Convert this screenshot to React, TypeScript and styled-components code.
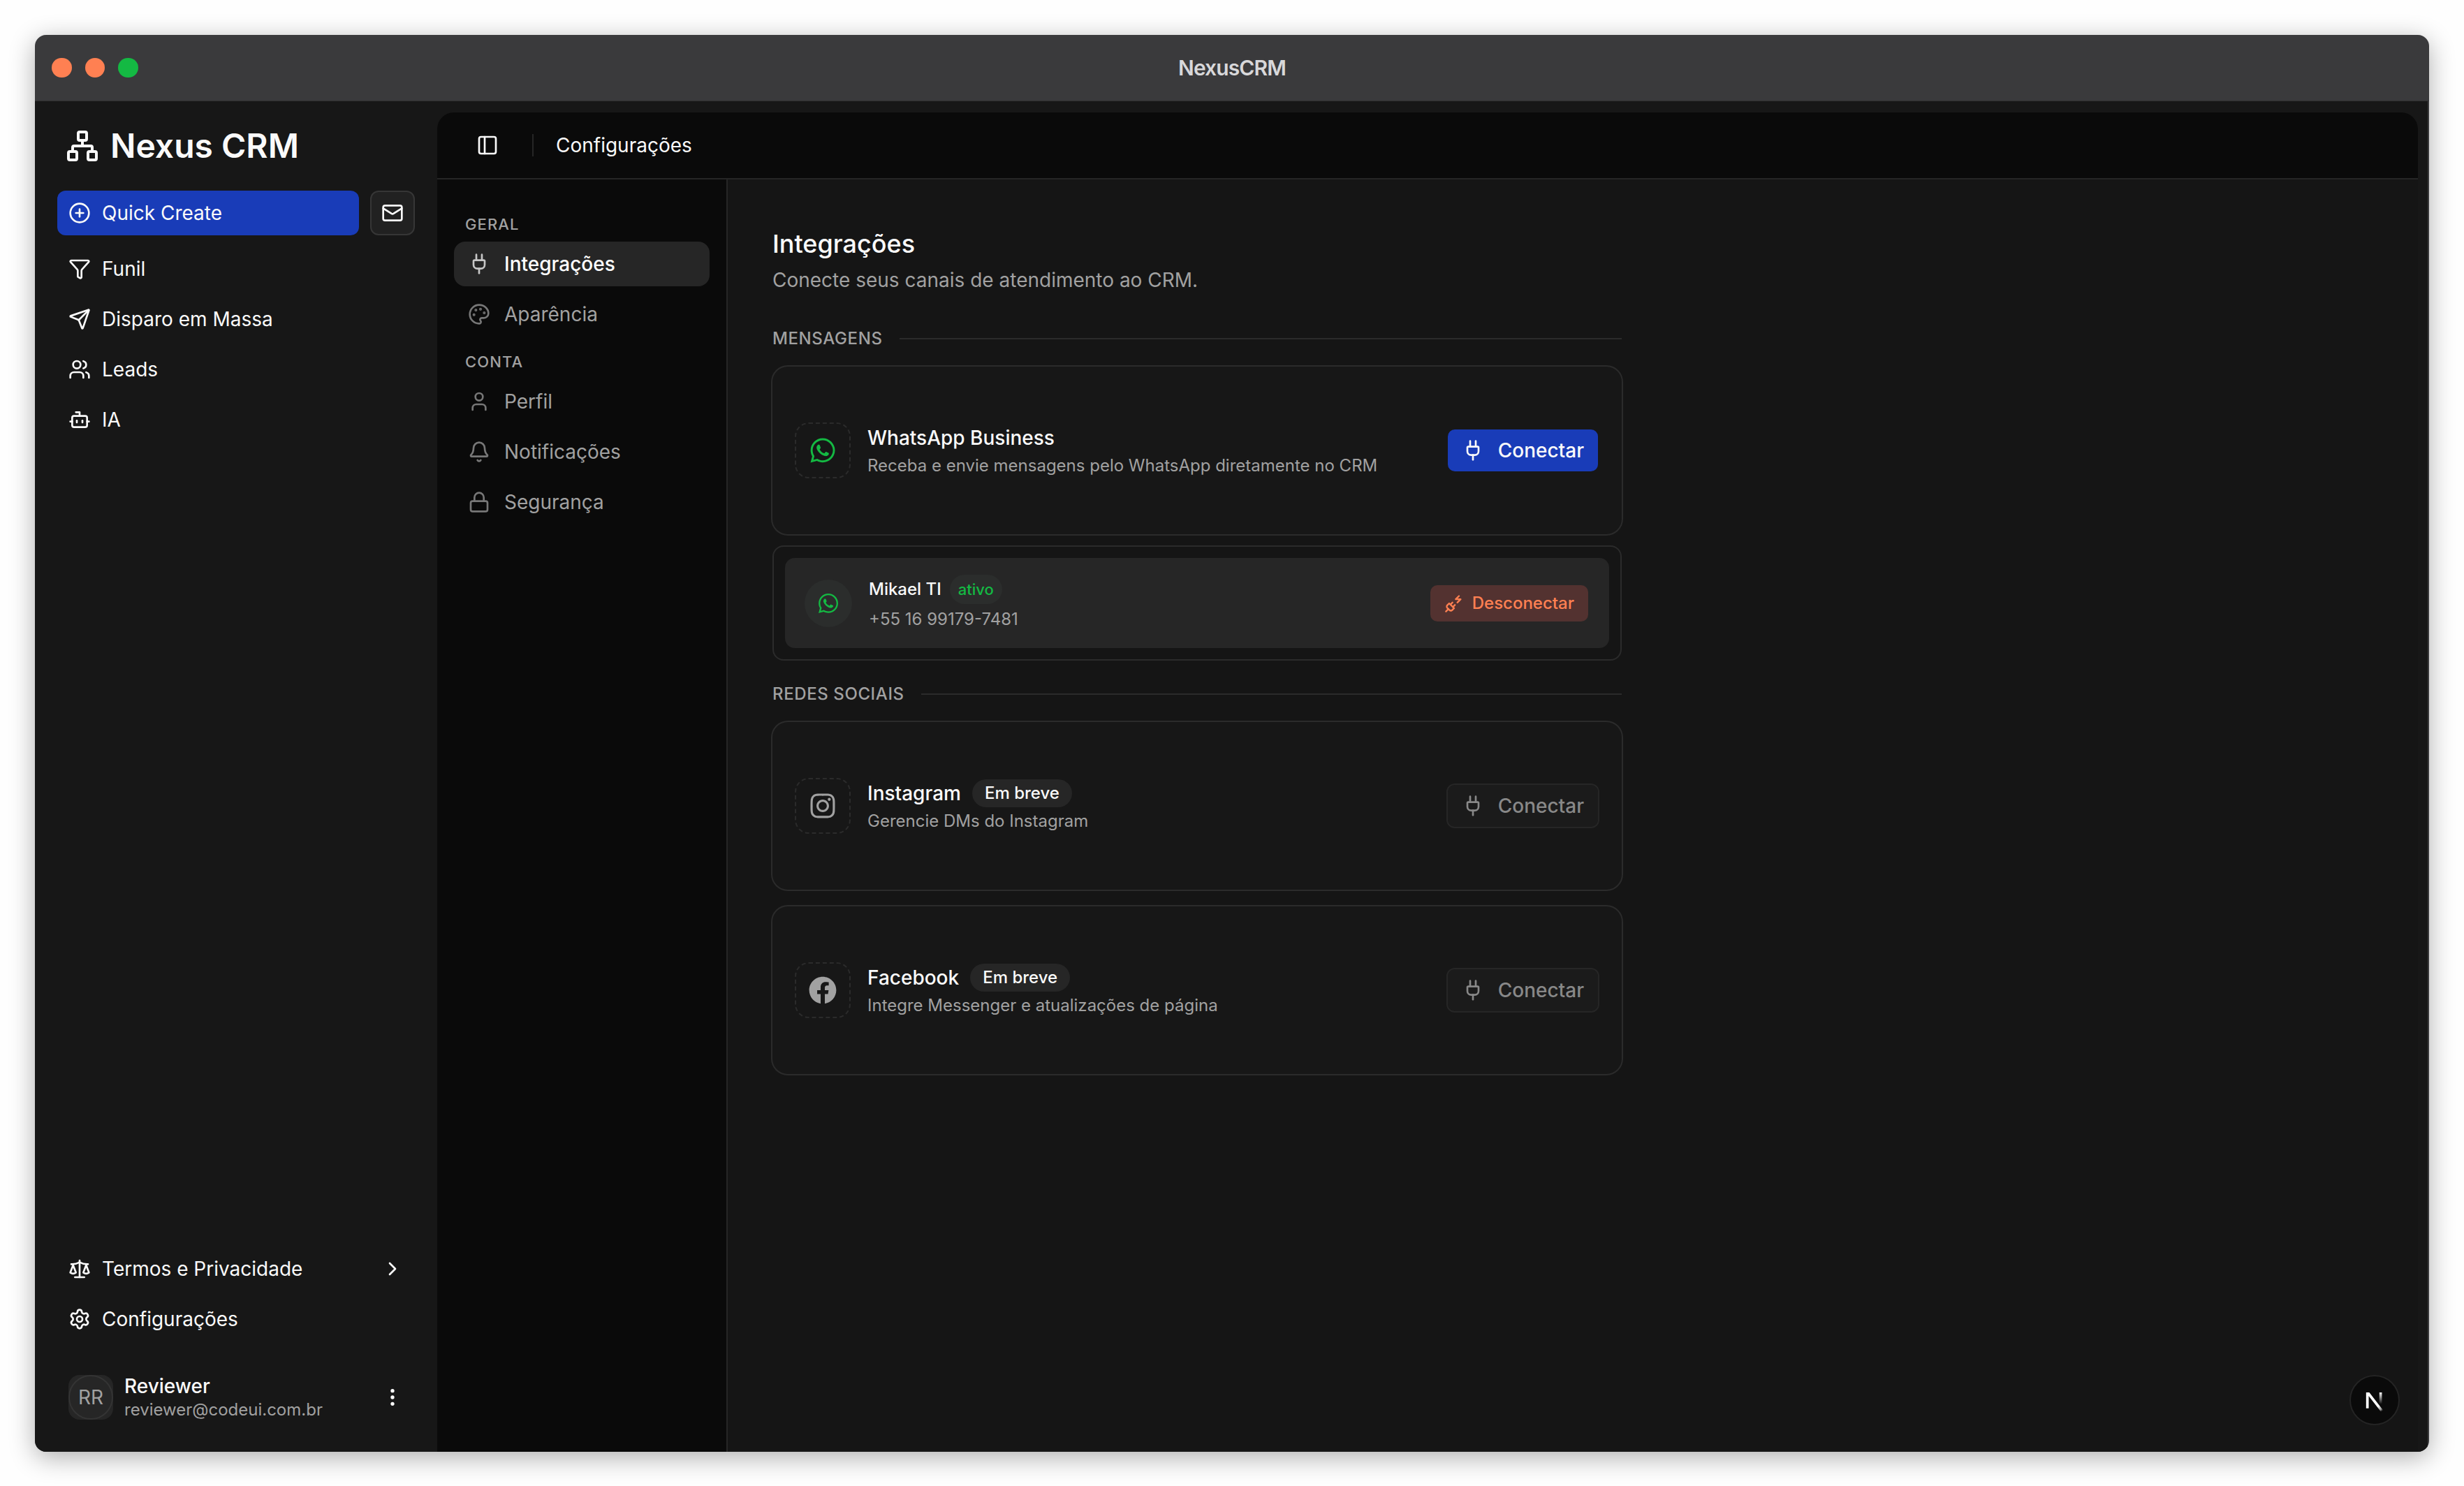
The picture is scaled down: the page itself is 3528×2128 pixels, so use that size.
import React from 'react';
import styled, { createGlobalStyle } from 'styled-components';
import {
  Bell,
  Bot,
  ChevronRight,
  CirclePlus,
  EllipsisVertical,
  Funnel,
  Lock,
  Mail,
  Network,
  Palette,
  PanelLeft,
  Plug,
  Scale,
  Send,
  Settings,
  User,
  Users,
} from 'lucide-react';
import { FaFacebook, FaInstagram, FaWhatsapp } from 'react-icons/fa';

const color = {
  sidebar: '#171717',
  panel: '#0a0a0a',
  content: '#151515',
  card: '#171717',
  accent: '#262626',
  border: '#2b2b2b',
  line: '#2b2b2b',
  text: '#fafafa',
  muted: '#a1a1a1',
  primary: '#193cb8',
  danger: '#ff8052',
  success: '#14b943',
};

const GlobalStyle = createGlobalStyle`
  *, *::before, *::after { box-sizing: border-box; }
  body {
    margin: 0;
    background: #fefefe;
    font-family: Inter, "Liberation Sans", sans-serif;
    font-size: 28px;
    line-height: 40px;
    color: ${color.text};
  }
  svg { display: block; flex: none; }
  button { font: inherit; color: inherit; margin: 0; }
`;

const Desktop = styled.div`
  width: 3528px;
  height: 2128px;
  padding: 50px 50px 49px;
  overflow: hidden;
`;

const Window = styled.div`
  height: 100%;
  display: flex;
  flex-direction: column;
  border-radius: 16px;
  overflow: hidden;
  background: #3a3a3c;
  box-shadow: 0 8px 36px rgba(0, 0, 0, 0.32);
`;

const TitleBar = styled.div`
  height: 95px;
  flex: none;
  display: grid;
  grid-template-columns: 1fr auto 1fr;
  align-items: center;
  padding: 0 24px;
  border-bottom: 1px solid #303031;
`;

const Lights = styled.div`
  display: flex;
  gap: 19px;
`;

const Light = styled.span<{ $tone: string }>`
  width: 28.5px;
  height: 28.5px;
  border-radius: 50%;
  background: ${(p) => p.$tone};
`;

const WindowTitle = styled.div`
  font-size: 30px;
  font-weight: 600;
  letter-spacing: -0.9px;
  color: #d8d8da;
`;

const Body = styled.div`
  flex: 1;
  min-height: 0;
  display: flex;
  margin-right: 2px;
  background: ${color.sidebar};
`;

const Sidebar = styled.aside`
  width: 576px;
  flex: none;
  display: flex;
  flex-direction: column;
  padding: 16px 32px 30px;
`;

const Brand = styled.div`
  height: 96px;
  display: flex;
  align-items: center;
  gap: 16px;
  padding-left: 12px;
  margin-bottom: 16px;
  font-size: 48px;
  font-weight: 600;
`;

const QuickRow = styled.div`
  display: flex;
  gap: 16px;
  margin-bottom: 16px;
`;

const QuickCreate = styled.button`
  flex: 1;
  height: 64px;
  display: flex;
  align-items: center;
  gap: 16px;
  padding: 0 16px;
  border: 0;
  border-radius: 12px;
  background: ${color.primary};
`;

const MailButton = styled.button`
  width: 64px;
  height: 64px;
  display: grid;
  place-items: center;
  padding: 0;
  border: 2px solid #363636;
  border-radius: 12px;
  background: #212121;
`;

const Menu = styled.nav`
  display: flex;
  flex-direction: column;
  gap: 8px;
`;

const MenuItem = styled.a`
  height: 64px;
  display: flex;
  align-items: center;
  gap: 16px;
  padding: 0 16px;

  span { flex: 1; }
`;

const Spacer = styled.div`
  flex: 1;
`;

const UserRow = styled.div`
  height: 96px;
  margin-top: 32px;
  display: flex;
  align-items: center;
  gap: 16px;
  padding: 0 16px;
`;

const Avatar = styled.div`
  width: 64px;
  height: 64px;
  border-radius: 16px;
  background: ${color.accent};

  span {
    width: 100%;
    height: 100%;
    display: grid;
    place-items: center;
    border: 2px solid #343434;
    border-radius: 50%;
    color: ${color.muted};
  }
`;

const UserText = styled.div`
  flex: 1;
  display: flex;
  flex-direction: column;
  padding-top: 2px;
  line-height: 34px;

  strong { font-weight: 500; }
  small { font-size: 24px; color: ${color.muted}; }
`;

const Main = styled.main`
  flex: 1;
  min-width: 0;
  display: flex;
  flex-direction: column;
  margin: 16px 14px 0 0;
  border-top-left-radius: 24px;
  border-top-right-radius: 24px;
  overflow: hidden;
  background: ${color.panel};
`;

const Header = styled.header`
  height: 96px;
  flex: none;
  display: flex;
  align-items: center;
  padding-left: 56px;
  border-bottom: 2px solid #262626;
`;

const HeaderRule = styled.span`
  width: 2px;
  height: 32px;
  margin: 0 32px 0 48px;
  background: #262626;
`;

const Columns = styled.div`
  flex: 1;
  display: flex;
`;

const SubNav = styled.nav`
  width: 416px;
  flex: none;
  display: flex;
  flex-direction: column;
  gap: 20px;
  padding: 48px 24px;
  border-right: 2px solid #262626;
`;

const Group = styled.div`
  display: flex;
  flex-direction: column;
  gap: 8px;
`;

const GroupLabel = styled.div`
  padding-left: 16px;
  font-size: 22px;
  line-height: 33px;
  font-weight: 500;
  letter-spacing: 0.05em;
  color: ${color.muted};
`;

const SubItem = styled.a<{ $active?: boolean }>`
  height: 64px;
  display: flex;
  align-items: center;
  gap: 20px;
  padding: 0 20px;
  border-radius: 16px;
  background: ${(p) => (p.$active ? color.accent : 'transparent')};
  color: ${(p) => (p.$active ? '#ffffff' : color.muted)};
  font-weight: ${(p) => (p.$active ? 500 : 400)};

  svg { color: ${(p) => (p.$active ? '#c6c6c6' : '#777777')}; }
`;

const Content = styled.section`
  flex: 1;
  padding: 64px;
  background: ${color.content};
`;

const Column = styled.div`
  width: 1216px;
  display: flex;
  flex-direction: column;
`;

const PageTitle = styled.h1`
  margin: 0 0 4px;
  font-size: 36px;
  line-height: 56px;
  font-weight: 500;
`;

const PageLead = styled.p`
  margin: 0 0 48px;
  color: ${color.muted};
`;

const Section = styled.section`
  display: flex;
  flex-direction: column;
  margin-bottom: 32px;
`;

const SectionHead = styled.div`
  height: 32px;
  display: flex;
  align-items: center;
  gap: 24px;
  margin-bottom: 24px;
  font-size: 24px;
  font-weight: 500;
  letter-spacing: 0.025em;
  color: ${color.muted};

  &::after {
    content: '';
    flex: 1;
    height: 2px;
    background: ${color.line};
  }
`;

const CardList = styled.div`
  display: flex;
  flex-direction: column;
  gap: 24px;
`;

const Card = styled.article`
  height: 240px;
  display: flex;
  align-items: center;
  gap: 24px;
  padding: 0 32px;
  border-radius: 22px;
  background: ${color.card};
  box-shadow: 0 0 0 2px ${color.border};
`;

const IconBox = styled.div<{ $tone: string }>`
  width: 80px;
  height: 80px;
  display: grid;
  place-items: center;
  border: 2px dashed ${color.line};
  border-radius: 20px;
  font-size: 40px;
  color: ${(p) => p.$tone};
`;

const CardText = styled.div`
  flex: 1;
  padding-top: 3px;
`;

const CardTitle = styled.div`
  height: 40px;
  display: flex;
  align-items: center;
  gap: 16px;
  font-weight: 500;
`;

const CardDesc = styled.div`
  font-size: 24px;
  line-height: 39px;
  color: ${color.muted};
`;

const SoonBadge = styled.span`
  height: 40px;
  padding: 0 18px;
  border-radius: 20px;
  background: ${color.accent};
  font-size: 24px;
  font-weight: 500;
  line-height: 39px;
`;

const ConnectButton = styled.button<{ $disabled?: boolean }>`
  height: 64px;
  display: flex;
  align-items: center;
  gap: 20px;
  padding: 0 20px;
  border: 2px solid ${(p) => (p.$disabled ? '#262626' : 'transparent')};
  border-radius: 12px;
  background: ${(p) => (p.$disabled ? '#1b1b1b' : color.primary)};
  background-clip: padding-box;
  color: ${(p) => (p.$disabled ? '#888888' : color.text)};
  font-weight: 500;
`;

const Sessions = styled.div`
  height: 165px;
  margin-top: 16px;
  padding: 16px;
  display: flex;
  border: 2px solid ${color.border};
  border-radius: 16px;
`;

const Session = styled.div`
  flex: 1;
  display: flex;
  align-items: center;
  gap: 24px;
  padding: 0 30px 0 28px;
  border-radius: 14px;
  background: ${color.accent};
`;

const SessionIcon = styled.div`
  width: 68px;
  height: 68px;
  display: grid;
  place-items: center;
  border-radius: 50%;
  background: #2b2d2c;
  font-size: 32px;
  color: ${color.success};
`;

const SessionText = styled.div`
  flex: 1;
  display: flex;
  flex-direction: column;
  gap: 4px;
  font-size: 24px;
  line-height: 36px;
`;

const SessionName = styled.div`
  display: flex;
  align-items: center;
  gap: 12px;
  font-weight: 500;
`;

const ActiveBadge = styled.span`
  height: 42px;
  padding: 0 12px;
  border-radius: 21px;
  background: #2b2d2c;
  font-size: 22px;
  line-height: 42px;
  color: ${color.success};
`;

const Phone = styled.div`
  color: ${color.muted};
`;

const DisconnectButton = styled.button`
  height: 52px;
  display: flex;
  align-items: center;
  gap: 12px;
  padding: 0 20px;
  border: 0;
  border-radius: 10px;
  background: #533230;
  color: ${color.danger};
  font-size: 24px;
  font-weight: 500;
`;

const DevBadge = styled.div`
  position: absolute;
  left: 3364px;
  top: 1969px;
  width: 72px;
  height: 72px;
  padding: 23px 0 0 19px;
  border-radius: 50%;
  border: 2px solid #242424;
  background: ${color.panel};
`;

function PlugZap() {
  return (
    <svg
      width="28"
      height="28"
      viewBox="0 0 24 24"
      fill="none"
      stroke="currentColor"
      strokeWidth="2"
      strokeLinecap="round"
      strokeLinejoin="round"
    >
      <path d="M6.3 20.3a2.4 2.4 0 0 0 3.4 0L12 18l-6-6-2.3 2.3a2.4 2.4 0 0 0 0 3.4Z" />
      <path d="m2 22 3-3" />
      <path d="M7.5 13.5 10 11" />
      <path d="M10.5 16.5 13 14" />
      <path d="m18 3-4 4h6l-4 4" />
    </svg>
  );
}

function NextMark() {
  return (
    <svg width="32" height="30" viewBox="0 1.25 16 15" fill="none" strokeWidth="1.86">
      <defs>
        <linearGradient id="diag" x1="9.95" y1="11.1" x2="13" y2="15.1" gradientUnits="userSpaceOnUse">
          <stop stopColor="#fff" />
          <stop offset="0.6" stopColor="#fff" stopOpacity="0.6" />
          <stop offset="0.9" stopColor="#fff" stopOpacity="0" />
        </linearGradient>
        <linearGradient id="bar" x1="11.8" y1="1" x2="11.8" y2="9.6" gradientUnits="userSpaceOnUse">
          <stop stopColor="#fff" />
          <stop offset="1" stopColor="#fff" stopOpacity="0" />
        </linearGradient>
      </defs>
      <path d="M13.3 15.2 2.34 1v11.6" stroke="url(#diag)" />
      <path d="M11.825 1.2v11.9" stroke="url(#bar)" />
    </svg>
  );
}

const menu = [
  { icon: Funnel, label: 'Funil' },
  { icon: Send, label: 'Disparo em Massa' },
  { icon: Users, label: 'Leads' },
  { icon: Bot, label: 'IA' },
];

const groups = [
  {
    label: 'GERAL',
    items: [
      { icon: Plug, label: 'Integrações', active: true },
      { icon: Palette, label: 'Aparência', active: false },
    ],
  },
  {
    label: 'CONTA',
    items: [
      { icon: User, label: 'Perfil', active: false },
      { icon: Bell, label: 'Notificações', active: false },
      { icon: Lock, label: 'Segurança', active: false },
    ],
  },
];

interface ChannelProps {
  icon: React.ReactNode;
  tone?: string;
  name: string;
  desc: string;
  soon?: boolean;
}

function Channel({ icon, tone = color.muted, name, desc, soon }: ChannelProps) {
  return (
    <Card>
      <IconBox $tone={tone}>{icon}</IconBox>
      <CardText>
        <CardTitle>
          {name}
          {soon && <SoonBadge>Em breve</SoonBadge>}
        </CardTitle>
        <CardDesc>{desc}</CardDesc>
      </CardText>
      <ConnectButton $disabled={soon}>
        <Plug size={32} />
        Conectar
      </ConnectButton>
    </Card>
  );
}

export default function App() {
  return (
    <>
      <GlobalStyle />
      <Desktop>
        <Window>
          <TitleBar>
            <Lights>
              <Light $tone={color.danger} />
              <Light $tone={color.danger} />
              <Light $tone={color.success} />
            </Lights>
            <WindowTitle>NexusCRM</WindowTitle>
          </TitleBar>
          <Body>
            <Sidebar>
              <Brand>
                <Network size={48} />
                Nexus CRM
              </Brand>
              <QuickRow>
                <QuickCreate>
                  <CirclePlus size={32} />
                  Quick Create
                </QuickCreate>
                <MailButton>
                  <Mail size={32} />
                </MailButton>
              </QuickRow>
              <Menu>
                {menu.map(({ icon: Icon, label }) => (
                  <MenuItem key={label}>
                    <Icon size={32} />
                    <span>{label}</span>
                  </MenuItem>
                ))}
              </Menu>
              <Spacer />
              <Menu>
                <MenuItem>
                  <Scale size={32} />
                  <span>Termos e Privacidade</span>
                  <ChevronRight size={32} />
                </MenuItem>
                <MenuItem>
                  <Settings size={32} />
                  <span>Configurações</span>
                </MenuItem>
              </Menu>
              <UserRow>
                <Avatar>
                  <span>RR</span>
                </Avatar>
                <UserText>
                  <strong>Reviewer</strong>
                  <small>reviewer@codeui.com.br</small>
                </UserText>
                <EllipsisVertical size={32} />
              </UserRow>
            </Sidebar>
            <Main>
              <Header>
                <PanelLeft size={32} />
                <HeaderRule />
                Configurações
              </Header>
              <Columns>
                <SubNav>
                  {groups.map((group) => (
                    <Group key={group.label}>
                      <GroupLabel>{group.label}</GroupLabel>
                      {group.items.map(({ icon: Icon, label, active }) => (
                        <SubItem key={label} $active={active}>
                          <Icon size={32} />
                          {label}
                        </SubItem>
                      ))}
                    </Group>
                  ))}
                </SubNav>
                <Content>
                  <Column>
                    <PageTitle>Integrações</PageTitle>
                    <PageLead>Conecte seus canais de atendimento ao CRM.</PageLead>
                    <Section>
                      <SectionHead>MENSAGENS</SectionHead>
                      <Channel
                        icon={<FaWhatsapp />}
                        tone={color.success}
                        name="WhatsApp Business"
                        desc="Receba e envie mensagens pelo WhatsApp diretamente no CRM"
                      />
                      <Sessions>
                        <Session>
                          <SessionIcon>
                            <FaWhatsapp />
                          </SessionIcon>
                          <SessionText>
                            <SessionName>
                              Mikael TI
                              <ActiveBadge>ativo</ActiveBadge>
                            </SessionName>
                            <Phone>+55 16 99179-7481</Phone>
                          </SessionText>
                          <DisconnectButton>
                            <PlugZap />
                            Desconectar
                          </DisconnectButton>
                        </Session>
                      </Sessions>
                    </Section>
                    <Section>
                      <SectionHead>REDES SOCIAIS</SectionHead>
                      <CardList>
                        <Channel
                          icon={<FaInstagram />}
                          name="Instagram"
                          desc="Gerencie DMs do Instagram"
                          soon
                        />
                        <Channel
                          icon={<FaFacebook />}
                          name="Facebook"
                          desc="Integre Messenger e atualizações de página"
                          soon
                        />
                      </CardList>
                    </Section>
                  </Column>
                </Content>
              </Columns>
            </Main>
          </Body>
        </Window>
        <DevBadge>
          <NextMark />
        </DevBadge>
      </Desktop>
    </>
  );
}
